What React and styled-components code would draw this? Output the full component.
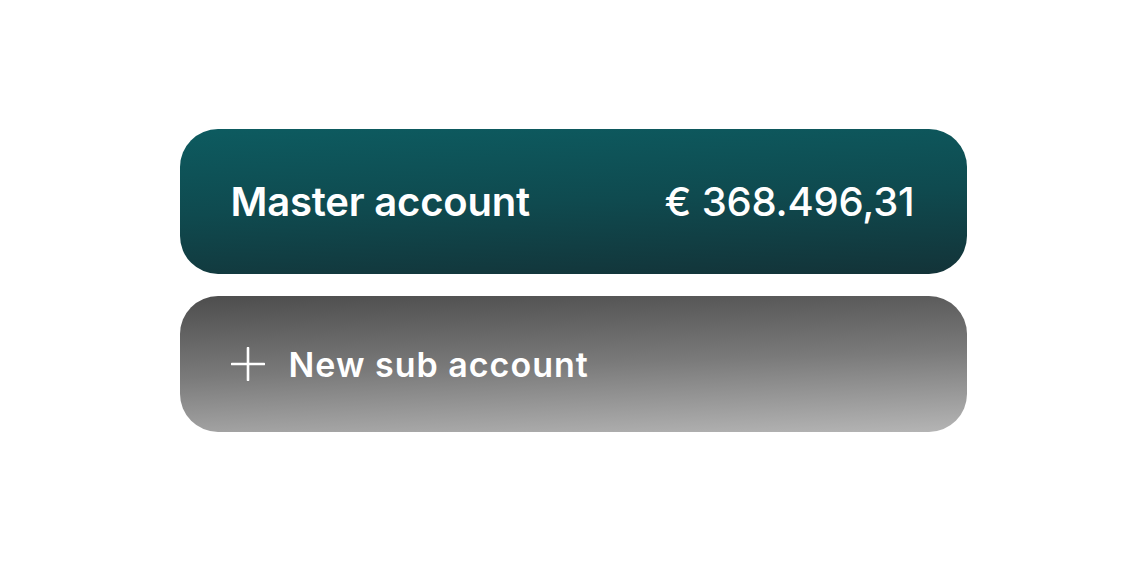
import React from "react";
import styled, { createGlobalStyle } from "styled-components";

const Global = createGlobalStyle`
body{
  margin:0;
  background:#ffffff;
  font-family:Inter,"Noto Sans",sans-serif;
}
`;

const Page = styled.div`
width:1146px;
height:574px;
display:flex;
flex-direction:column;
align-items:center;
padding-top:129px;
box-sizing:border-box;
gap:22px;
`;

const Card = styled.div`
width:787px;
height:${(p) => p.h}px;
box-sizing:border-box;
border-radius:38px;
padding:0 52px 0 51px;
display:flex;
align-items:center;
justify-content:space-between;
color:#ffffff;
background:${(p) =>
  p.grey
    ? "linear-gradient(178deg,#4d4d4d 0%,#7a7a7a 50%,#b5b5b5 100%)"
    : "linear-gradient(178deg,#0d5b60 0%,#0f4a4f 50%,#133338 100%)"};
`;

const Label = styled.span`
font-size:${(p) => p.size}px;
font-weight:600;
letter-spacing:${(p) => p.track}px;
`;

const Amount = styled.span`
font-size:40px;
font-weight:500;
letter-spacing:-0.2px;
`;

const Left = styled.div`
display:flex;
align-items:center;
gap:24px;
`;

function Plus() {
  return (
    <svg width="34" height="34" viewBox="0 0 34 34">
      <path d="M17 1v32M1 17h32" stroke="#fff" strokeWidth="2.6" strokeLinecap="round" />
    </svg>
  );
}

export default function App() {
  return (
    <Page>
      <Global />
      <Card h={145}>
        <Label size={40} track={-0.2}>Master account</Label>
        <Amount>€ 368.496,31</Amount>
      </Card>
      <Card h={136} grey>
        <Left>
          <Plus />
          <Label size={34} track={1}>New sub account</Label>
        </Left>
      </Card>
    </Page>
  );
}
